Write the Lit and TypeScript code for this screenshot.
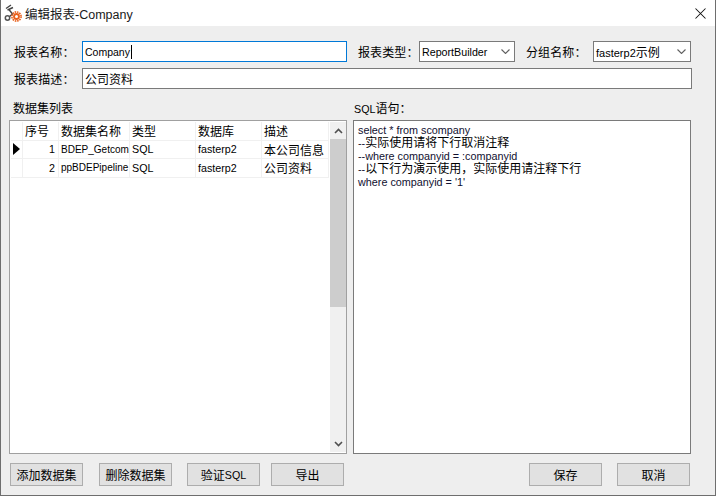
import { LitElement, html, css, svg } from "lit";
import { customElement } from "lit/decorators.js";

const rows = [
  ["1", "BDEP_Getcom", "SQL", "fasterp2", "本公司信息"],
  ["2", "ppBDEPipeline", "SQL", "fasterp2", "公司资料"],
];
const sql = [
  ["select * from scompany"],
  ["--", "实际使用请将下行取消注释"],
  ["--where companyid = :companyid"],
  ["--", "以下行为演示使用，实际使用请注释下行"],
  ["where companyid = '1'"],
];
const chev = svg`<svg class="chev" width="9" height="5" viewBox="0 0 9 5"><path d="M.5.5 4.5 4.5 8.5.5" fill="none" stroke="#606060" stroke-width="1.1"/></svg>`;

@customElement("app-root")
export class AppRoot extends LitElement {
  static styles = css`
    :host { display: block; width: 716px; height: 496px; overflow: hidden;
      font-family: "Liberation Sans", "Noto Sans CJK SC", sans-serif; font-size: 10.7px; color: #000; }
    * { box-sizing: border-box; }
    .win { width: 716px; height: 496px; background: #eeeeee; border: 1px solid #6e6e6e; border-top: 0; display: flex; flex-direction: column; }
    .title { height: 26px; background: #fff; display: flex; align-items: center; padding-left: 3px; font-size: 12.5px; color: #1a1a1a; flex: none; }
    .title svg { margin-right: 3px; }
    .title .x { margin: 0 9px 0 auto; }
    .form { padding: 15px 0 0 13px; display: flex; flex-direction: column; gap: 6px; }
    .row { display: flex; align-items: center; height: 21px; }
    .lbl { font-size: 12px; letter-spacing: 0.1px; white-space: nowrap; }
    .l1 { width: 68px; }
    .input { height: 21px; background: #fff; border: 1px solid #7a7a7a; padding: 0 2px; display: flex; align-items: center; }
    .focus { width: 265px; border-color: #0078d7; font-size: 10.5px; }
    .caret { display: inline-block; width: 1px; height: 14px; background: #000; margin-left: 1px; }
    .wide { width: 610px; font-size: 12px; }
    .l2 { margin-left: 11px; width: 61px; }
    .l3 { margin-left: 11px; width: 67px; }
    .sel { justify-content: space-between; padding-right: 4px; }
    .s1 { width: 96px; }
    .s2 { width: 98px; font-size: 11px; }
    .panes { display: flex; margin: 13px 0 0 8px; gap: 6px; }
    .pane { width: 338px; display: flex; flex-direction: column; }
    .cap { height: 18px; font-size: 12px; line-height: 14px; margin-left: 4px; }
    .sql .cap { margin-left: 1px; }
    .lat { font-size: 10.7px; }
    .box { height: 334px; background: #fff; border: 1px solid #a0a0a0; }
    .gridbox { display: flex; padding: 1px; }
    .table { width: 318px; flex: none; }
    .tr { display: grid; grid-template-columns: 12px 36px 71px 66px 66px 67px; height: 18.5px; }
    .td { border-right: 1px solid #f0f0f0; border-bottom: 1px solid #f0f0f0; padding: 0 1px 0 2px; display: flex; align-items: center; white-space: nowrap; overflow: hidden; font-size: 10.7px; }
    .hd .td { font-size: 12px; padding-left: 2px; }
    .cjk { font-size: 12px; }
    .name { font-size: 10px; }
    .td.name { font-size: 10px; }
    .num { justify-content: flex-end; padding-right: 3px; }
    .ind { padding: 0 0 0 2px; }
    .bar { margin-left: 1px; width: 16px; flex: none; background: #f0f0f0; display: flex; flex-direction: column; align-items: center; }
    .arrow { height: 17px; flex: none; display: flex; align-items: center; justify-content: center; }
    .thumb { width: 100%; height: 168px; background: #cdcdcd; flex: none; }
    .fill { flex: 1; }
    .sqlbox { border-color: #7a7a7a; padding: 3px 4px; font-size: 10.8px; line-height: 13px; color: #101030; white-space: pre; }
    .sqlbox .c { font-size: 12px; color: #000; }
    .line { height: 13px; }
    .btns { display: flex; margin: 9px 0 0 9px; }
    .btn { width: 73px; height: 23px; background: #e1e1e1; border: 1px solid #adadad; display: flex; align-items: center; justify-content: center; font-size: 12px; }
    .m1 { margin-left: 16px; }
    .m2 { margin-left: 15px; }
    .m3 { margin-left: 11px; }
    .m4 { margin-left: auto; }
    .m5 { margin: 0 25px 0 15px; }
  `;

  render() {
    return html`<div class="win">
      <div class="title">
        <svg width="18" height="18" viewBox="0 0 18 18">
          <path d="M7 1 2 4.5M9 3.5 3.5 6M4.5 5 8.5 10 5 13" fill="none" stroke="#444" stroke-width="1.4"/>
          <circle cx="3.5" cy="14" r="2.2" fill="none" stroke="#555" stroke-width="1.5"/>
          <circle cx="12.5" cy="12.5" r="4.6" fill="none" stroke="#e8601c" stroke-width="1.6" stroke-dasharray="1.6 .8"/>
          <circle cx="12.5" cy="12.5" r="3.4" fill="#e8601c"/>
          <circle cx="12.5" cy="12.5" r="1.5" fill="#fff"/>
        </svg>
        <span>编辑报表-Company</span>
        <svg class="x" width="11" height="11" viewBox="0 0 11 11"><path d="M.5.5 10.5 10.5M10.5.5 .5 10.5" stroke="#111" stroke-width="1.05"/></svg>
      </div>
      <div class="form">
        <div class="row">
          <span class="lbl l1">报表名称：</span>
          <div class="input focus">Company<span class="caret"></span></div>
          <span class="lbl l2">报表类型：</span>
          <div class="input sel s1"><span>ReportBuilder</span>${chev}</div>
          <span class="lbl l3">分组名称：</span>
          <div class="input sel s2"><span>fasterp2<span class="cjk">示例</span></span>${chev}</div>
        </div>
        <div class="row">
          <span class="lbl l1">报表描述：</span>
          <div class="input wide">公司资料</div>
        </div>
      </div>
      <div class="panes">
        <div class="pane">
          <div class="cap">数据集列表</div>
          <div class="box gridbox">
            <div class="table">
              <div class="tr hd">
                <div class="td"></div><div class="td">序号</div><div class="td">数据集名称</div>
                <div class="td">类型</div><div class="td">数据库</div><div class="td">描述</div>
              </div>
              ${rows.map((r, i) => html`<div class="tr">
                <div class="td ind">${i === 0 ? svg`<svg width="7" height="12" viewBox="0 0 7 12"><path d="M0 0 7 6 0 12Z" fill="#000"/></svg>` : ""}</div>
                <div class="td num">${r[0]}</div><div class="td name">${r[1]}</div><div class="td">${r[2]}</div>
                <div class="td">${r[3]}</div><div class="td cjk">${r[4]}</div>
              </div>`)}
            </div>
            <div class="bar">
              <div class="arrow"><svg width="9" height="6" viewBox="0 0 9 6"><path d="M1 5 4.5 1.5 8 5" fill="none" stroke="#505050" stroke-width="1.6"/></svg></div>
              <div class="thumb"></div>
              <div class="fill"></div>
              <div class="arrow"><svg width="9" height="6" viewBox="0 0 9 6"><path d="M1 1 4.5 4.5 8 1" fill="none" stroke="#505050" stroke-width="1.6"/></svg></div>
            </div>
          </div>
        </div>
        <div class="pane sql">
          <div class="cap"><span class="lat">SQL</span>语句：</div>
          <div class="box sqlbox">${sql.map((l) => html`<div class="line">${l[0]}${l[1] ? html`<span class="c">${l[1]}</span>` : ""}</div>`)}</div>
        </div>
      </div>
      <div class="btns">
        <div class="btn">添加数据集</div>
        <div class="btn m1">删除数据集</div>
        <div class="btn m2">验证<span class="lat">SQL</span></div>
        <div class="btn m3">导出</div>
        <div class="btn m4">保存</div>
        <div class="btn m5">取消</div>
      </div>
    </div>`;
  }
}
